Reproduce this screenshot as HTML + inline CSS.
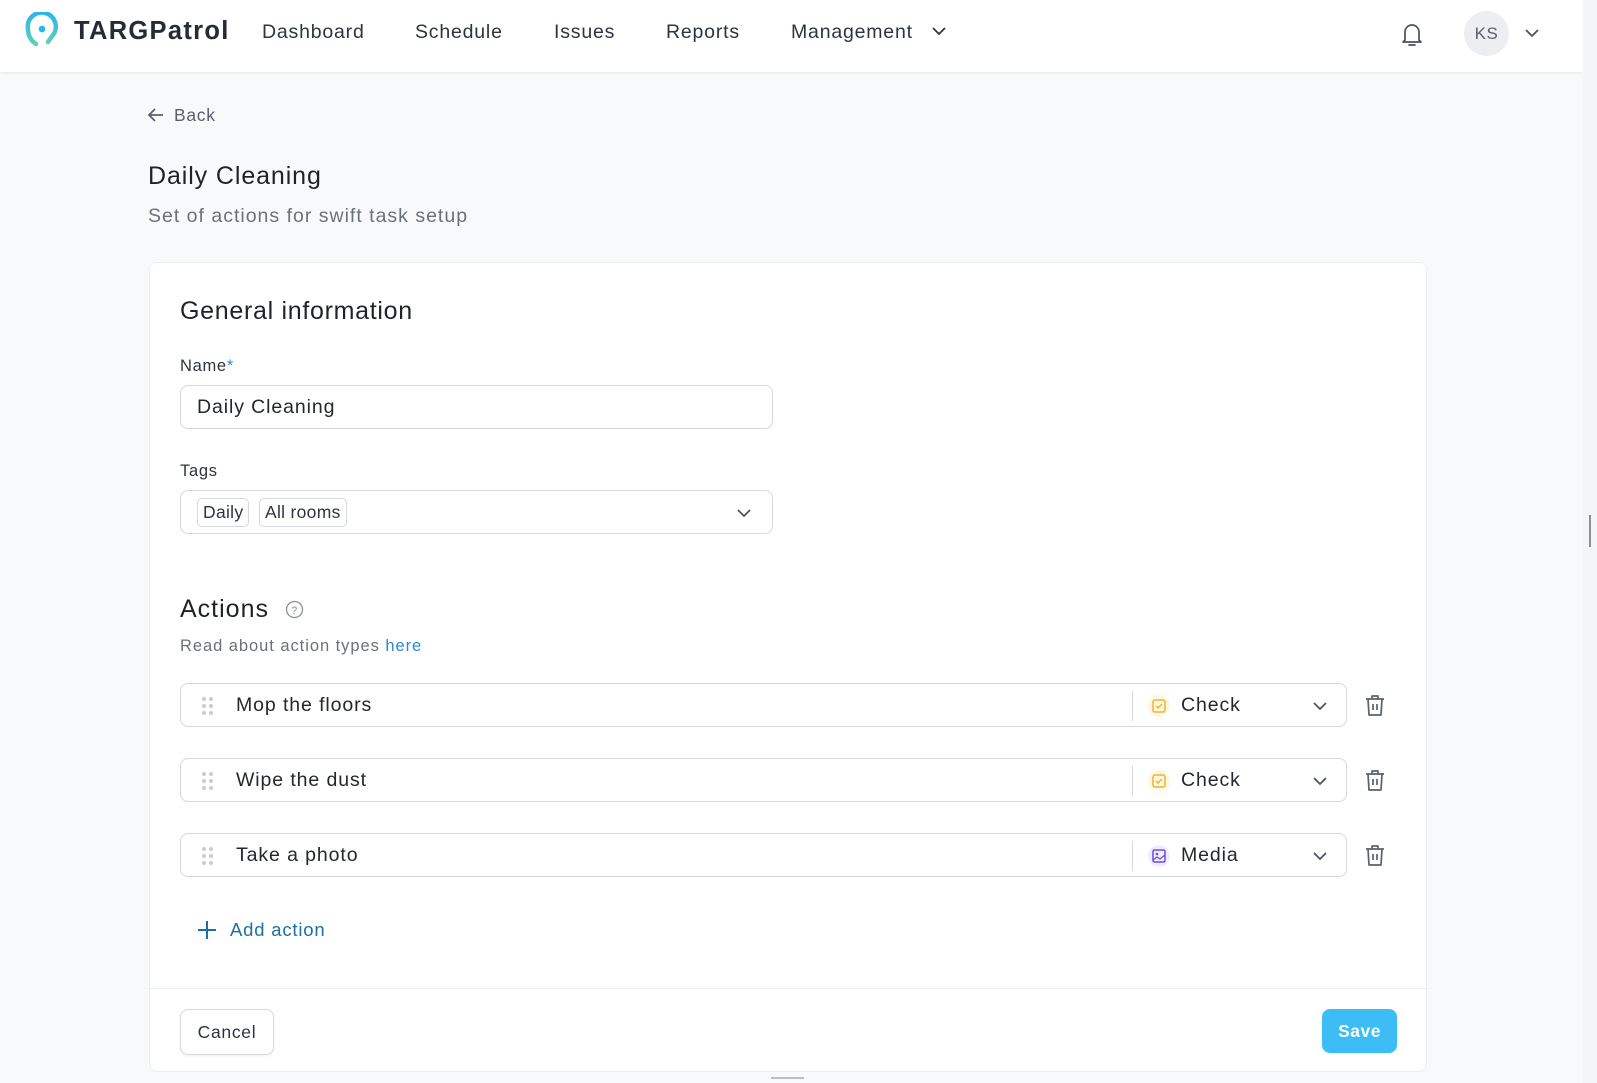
<!DOCTYPE html>
<html><head><meta charset="utf-8">
<style>
*{box-sizing:border-box;margin:0;padding:0}
body{width:1597px;height:1083px;overflow:hidden;background:#f8f9fb;font-family:"Liberation Sans",sans-serif;color:#1f2328;position:relative;letter-spacing:.7px}
.abs{position:absolute;white-space:nowrap}
.hdr{position:absolute;left:0;top:0;width:1583px;height:72px;background:#fff;box-shadow:0 1px 3px rgba(0,0,0,.08)}
.nav{position:absolute;top:21px;font-size:19.5px;color:#2d3340;letter-spacing:.8px}
.sb{position:absolute;left:1583px;top:0;width:14px;height:1083px;background:#f4f5f7}
.card{position:absolute;left:149px;top:262px;width:1278px;height:810px;background:#fff;border:1px solid #eceef1;border-radius:8px}
.inp{position:absolute;border:1px solid #d4d7dc;border-radius:8px;background:#fff}
.lbl{font-size:16.5px;color:#2d3340}
.chip{position:absolute;top:7px;height:29px;border:1px solid #d4d7dc;border-radius:5px;font-size:17.5px;line-height:27px;padding:0 5px;color:#2d3340;letter-spacing:.3px}
.rowtxt{position:absolute;left:55px;top:10px;font-size:19.5px;color:#23272e;letter-spacing:.9px}
.div{position:absolute;left:951px;top:7px;width:1px;height:30px;background:#d4d7dc}
.ttxt{position:absolute;left:1000px;top:10px;font-size:19.5px;color:#23272e;letter-spacing:.9px}
.dots{position:absolute;left:20px;top:12px}
</style></head><body>
<div class="hdr">
<svg class="abs" style="left:25px;top:12px" width="34" height="40" viewBox="0 0 34 40"><defs><linearGradient id="g" x1="0" y1="0" x2="0" y2="1"><stop offset="0" stop-color="#29b4ee"/><stop offset="1" stop-color="#5fd0b5"/></linearGradient></defs><path d="M11 32 C5 28 3 23 3 17 A14 14 0 1 1 28 23 L23 30" fill="none" stroke="url(#g)" stroke-width="4.5" stroke-linecap="round"/><circle cx="17" cy="17" r="3.3" fill="#29b4ee"/></svg>
<div class="abs" style="left:74px;top:17px;font-size:25.5px;font-weight:bold;color:#262b36;letter-spacing:1.3px">TARGPatrol</div>
<div class="nav" style="left:262px">Dashboard</div>
<div class="nav" style="left:415px">Schedule</div>
<div class="nav" style="left:554px">Issues</div>
<div class="nav" style="left:666px">Reports</div>
<div class="nav" style="left:791px">Management</div>
<svg class="abs" style="left:931px;top:26px" width="16" height="10"><path d="M2 2l6 6 6-6" fill="none" stroke="#2d3340" stroke-width="1.8"/></svg>
<svg class="abs" style="left:1400px;top:20px" width="24" height="28" viewBox="0 0 24 28"><path d="M5 20V12a7 7 0 0 1 14 0v8l2 2H3z" fill="none" stroke="#4b5160" stroke-width="1.7" stroke-linejoin="round"/><path d="M9 25h6" stroke="#4b5160" stroke-width="1.7" stroke-linecap="round"/></svg>
<div class="abs" style="left:1464px;top:11px;width:45px;height:45px;border-radius:50%;background:#eceef1;font-size:17px;color:#5a606c;text-align:center;line-height:45px;letter-spacing:.5px">KS</div>
<svg class="abs" style="left:1524px;top:28px" width="16" height="10"><path d="M2 2l6 6 6-6" fill="none" stroke="#4b5160" stroke-width="1.8"/></svg>
</div>
<div class="sb"><div style="position:absolute;left:6px;top:515px;width:2px;height:32px;background:#8a8f99"></div></div>

<svg class="abs" style="left:147px;top:107px" width="18" height="16"><path d="M16 8H3M8 2L2 8l6 6" fill="none" stroke="#5a606c" stroke-width="1.7"/></svg>
<div class="abs" style="left:174px;top:105px;font-size:17.5px;color:#5a606c">Back</div>
<div class="abs" style="left:148px;top:162px;font-size:25px;color:#1f2328;letter-spacing:.9px">Daily Cleaning</div>
<div class="abs" style="left:148px;top:205px;font-size:19.5px;color:#6b717c;letter-spacing:1px">Set of actions for swift task setup</div>

<div class="card">
<div class="abs" style="left:30px;top:34px;font-size:25px;color:#1f2328;letter-spacing:.7px">General information</div>
<div class="abs lbl" style="left:30px;top:94px">Name<span style="color:#2b8ad8">*</span></div>
<div class="inp" style="left:30px;top:122px;width:593px;height:44px"><div class="abs" style="left:16px;top:10px;font-size:19.5px;color:#23272e;letter-spacing:.9px">Daily Cleaning</div></div>
<div class="abs lbl" style="left:30px;top:199px">Tags</div>
<div class="inp" style="left:30px;top:227px;width:593px;height:44px">
<div class="chip" style="left:16px">Daily</div><div class="chip" style="left:78px">All rooms</div>
<svg class="abs" style="left:555px;top:17px" width="16" height="10"><path d="M2 2l6 6 6-6" fill="none" stroke="#4b5160" stroke-width="1.7"/></svg>
</div>
<div class="abs" style="left:30px;top:332px;font-size:25px;color:#1f2328;letter-spacing:1px">Actions</div>
<svg class="abs" style="left:135px;top:337px" width="19" height="19"><circle cx="9.5" cy="9.5" r="8" fill="none" stroke="#8a8f99" stroke-width="1.3"/><text x="9.5" y="14" font-size="11" text-anchor="middle" fill="#8a8f99" font-family="Liberation Sans">?</text></svg>
<div class="abs" style="left:30px;top:374px;font-size:16.5px;color:#6b717c;letter-spacing:.95px">Read about action types <span style="color:#2b8ad8">here</span></div>

<div class="inp" style="left:30px;top:420px;width:1167px;height:44px">
<svg class="dots" width="14" height="20"><g fill="#c9ccd1"><circle cx="3" cy="3" r="2"/><circle cx="10" cy="3" r="2"/><circle cx="3" cy="10" r="2"/><circle cx="10" cy="10" r="2"/><circle cx="3" cy="17" r="2"/><circle cx="10" cy="17" r="2"/></g></svg>
<div class="rowtxt">Mop the floors</div><div class="div"></div>
<svg class="abs" style="left:966px;top:10px" width="24" height="24"><circle cx="12" cy="12" r="11" fill="#fff7e6"/><rect x="6" y="6" width="12" height="12" rx="2" fill="none" stroke="#f0b429" stroke-width="1.5"/><path d="M9 12l2 2 4-4" fill="none" stroke="#f0b429" stroke-width="1.5"/></svg>
<div class="ttxt">Check</div>
<svg class="abs" style="left:1131px;top:17px" width="16" height="10"><path d="M2 2l6 6 6-6" fill="none" stroke="#4b5160" stroke-width="1.7"/></svg>
</div>
<div class="inp" style="left:30px;top:495px;width:1167px;height:44px">
<svg class="dots" width="14" height="20"><g fill="#c9ccd1"><circle cx="3" cy="3" r="2"/><circle cx="10" cy="3" r="2"/><circle cx="3" cy="10" r="2"/><circle cx="10" cy="10" r="2"/><circle cx="3" cy="17" r="2"/><circle cx="10" cy="17" r="2"/></g></svg>
<div class="rowtxt">Wipe the dust</div><div class="div"></div>
<svg class="abs" style="left:966px;top:10px" width="24" height="24"><circle cx="12" cy="12" r="11" fill="#fff7e6"/><rect x="6" y="6" width="12" height="12" rx="2" fill="none" stroke="#f0b429" stroke-width="1.5"/><path d="M9 12l2 2 4-4" fill="none" stroke="#f0b429" stroke-width="1.5"/></svg>
<div class="ttxt">Check</div>
<svg class="abs" style="left:1131px;top:17px" width="16" height="10"><path d="M2 2l6 6 6-6" fill="none" stroke="#4b5160" stroke-width="1.7"/></svg>
</div>
<div class="inp" style="left:30px;top:570px;width:1167px;height:44px">
<svg class="dots" width="14" height="20"><g fill="#c9ccd1"><circle cx="3" cy="3" r="2"/><circle cx="10" cy="3" r="2"/><circle cx="3" cy="10" r="2"/><circle cx="10" cy="10" r="2"/><circle cx="3" cy="17" r="2"/><circle cx="10" cy="17" r="2"/></g></svg>
<div class="rowtxt">Take a photo</div><div class="div"></div>
<svg class="abs" style="left:966px;top:10px" width="24" height="24"><circle cx="12" cy="12" r="11" fill="#f1ecfd"/><rect x="6" y="6" width="12" height="12" rx="1.5" fill="none" stroke="#6d4bd8" stroke-width="1.5"/><circle cx="10" cy="10" r="1.3" fill="#6d4bd8"/><path d="M6 16l4-3 3 2 5-4" fill="none" stroke="#6d4bd8" stroke-width="1.3"/></svg>
<div class="ttxt">Media</div>
<svg class="abs" style="left:1131px;top:17px" width="16" height="10"><path d="M2 2l6 6 6-6" fill="none" stroke="#4b5160" stroke-width="1.7"/></svg>
</div>
<svg class="abs" style="left:1214px;top:430px" width="22" height="24" viewBox="0 0 22 24"><g fill="none" stroke="#5a606c" stroke-width="1.7" stroke-linejoin="round"><path d="M2 6h18M8 6V3h6v3M4 6l1 16h12l1-16M9 11v6M13 11v6"/></g></svg>
<svg class="abs" style="left:1214px;top:505px" width="22" height="24" viewBox="0 0 22 24"><g fill="none" stroke="#5a606c" stroke-width="1.7" stroke-linejoin="round"><path d="M2 6h18M8 6V3h6v3M4 6l1 16h12l1-16M9 11v6M13 11v6"/></g></svg>
<svg class="abs" style="left:1214px;top:580px" width="22" height="24" viewBox="0 0 22 24"><g fill="none" stroke="#5a606c" stroke-width="1.7" stroke-linejoin="round"><path d="M2 6h18M8 6V3h6v3M4 6l1 16h12l1-16M9 11v6M13 11v6"/></g></svg>

<svg class="abs" style="left:47px;top:657px" width="20" height="20"><path d="M10 1v18M1 10h18" stroke="#1d6fa5" stroke-width="2"/></svg>
<div class="abs" style="left:80px;top:656px;font-size:18.5px;color:#1d6fa5;letter-spacing:.8px">Add action</div>
<div class="abs" style="left:0;top:725px;width:1276px;height:1px;background:#eceef1"></div>
<div class="abs" style="left:30px;top:746px;width:94px;height:46px;border:1px solid #d4d7dc;border-radius:8px;font-size:17.5px;line-height:44px;text-align:center;color:#2d3340;box-shadow:0 1px 2px rgba(0,0,0,.06)">Cancel</div>
<div class="abs" style="left:1172px;top:746px;width:75px;height:44px;background:#3cbdf5;border-radius:8px;font-size:17.5px;line-height:44px;text-align:center;color:#fff;font-weight:bold;letter-spacing:.5px">Save</div>
</div>
<div class="abs" style="left:771px;top:1077px;width:33px;height:2px;background:#b9bdc4"></div>
</body></html>
